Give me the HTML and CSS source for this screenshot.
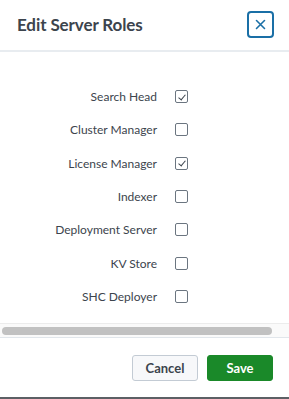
FILE: index.html
```html
<!DOCTYPE html>
<html lang="en">
  <head>
    <meta charset="UTF-8" />
    <meta name="viewport" content="width=device-width, initial-scale=1.0" />
    <title>Edit Server Roles</title>
    <link rel="stylesheet" href="styles.css">
  </head>
  <body>
    <div class="modal">
      <div class="modal-header">
        <div class="modal-title">Edit Server Roles</div>
        <button class="close-btn" aria-label="Close">
          <svg width="11" height="11" viewBox="0 0 11 11">
            <path d="M1.5 1.5 L9.5 9.5 M9.5 1.5 L1.5 9.5" stroke="#1a6fa6" stroke-width="1.6" stroke-linecap="round" fill="none" />
          </svg>
        </button>
      </div>

      <div class="modal-body">
        <div class="roles">
          <div class="role-label">Search Head</div>
          <div class="check checked"></div>

          <div class="role-label">Cluster Manager</div>
          <div class="check"></div>

          <div class="role-label">License Manager</div>
          <div class="check checked"></div>

          <div class="role-label">Indexer</div>
          <div class="check"></div>

          <div class="role-label">Deployment Server</div>
          <div class="check"></div>

          <div class="role-label">KV Store</div>
          <div class="check"></div>

          <div class="role-label">SHC Deployer</div>
          <div class="check"></div>
        </div>
      </div>

      <div class="scroll-track">
        <div class="scroll-thumb"></div>
      </div>

      <div class="modal-footer">
        <button class="btn btn-cancel">Cancel</button>
        <button class="btn btn-save">Save</button>
      </div>
    </div>
    <div class="page-edge"></div>
  </body>
</html>
```

FILE: styles.css
```css
* {
  box-sizing: border-box;
  margin: 0;
  padding: 0;
  font-family: Lato, "Open Sans", "Liberation Sans", sans-serif;
}

body {
  background: white;
  width: 289px;
  height: 399px;
  overflow: hidden;
  display: flex;
  flex-direction: column;
}

.modal {
  flex: 1;
  display: flex;
  flex-direction: column;
}

.modal-header {
  height: 52px;
  display: flex;
  align-items: center;
  justify-content: space-between;
  padding: 0 15px 2px 17px;
  border-bottom: 2px solid #e8ecf0;
}

.modal-title {
  font-size: 17px;
  font-weight: bold;
  color: #3c444d;
  letter-spacing: -0.1px;
}

.close-btn {
  width: 27px;
  height: 27px;
  border: 2px solid #1a6fa6;
  border-radius: 4px;
  background: white;
  display: flex;
  align-items: center;
  justify-content: center;
}

.modal-body {
  height: 271px;
  padding: 28px 0 0 16px;
}

.roles {
  display: grid;
  grid-template-columns: 141px 13px;
  column-gap: 18px;
  grid-auto-rows: 33.3px;
  align-items: center;
}

.role-label {
  text-align: right;
  font-size: 12px;
  color: #3c444d;
}

.check {
  width: 13px;
  height: 13px;
  border: 1px solid #6b7580;
  border-radius: 2px;
  background: white;
  position: relative;
}

.check.checked::after {
  content: "";
  position: absolute;
  left: 4px;
  top: 1.5px;
  width: 3px;
  height: 6px;
  border-right: 1px solid #3c444d;
  border-bottom: 1px solid #3c444d;
  transform: rotate(40deg);
}

.scroll-track {
  height: 14px;
  background: #fafafa;
  border-top: 1px solid #ececec;
  padding: 3px 17px 0 2px;
}

.scroll-thumb {
  height: 8px;
  border-radius: 4px;
  background: #c1c1c1;
}

.modal-footer {
  flex: 1;
  border-top: 1px solid #e1e6eb;
  display: flex;
  justify-content: flex-end;
  align-items: flex-start;
  gap: 9px;
  padding: 17px 16px 0 0;
}

.btn {
  width: 66px;
  height: 26px;
  border-radius: 3px;
  font-size: 13px;
  font-weight: bold;
}

.btn-cancel {
  background: #f7f8fa;
  border: 1px solid #c3cbd4;
  color: #3c444d;
}

.btn-save {
  background: #1a8929;
  border: 1px solid #1a8929;
  color: white;
}

.page-edge {
  height: 2px;
  background: #5c6065;
}
```
